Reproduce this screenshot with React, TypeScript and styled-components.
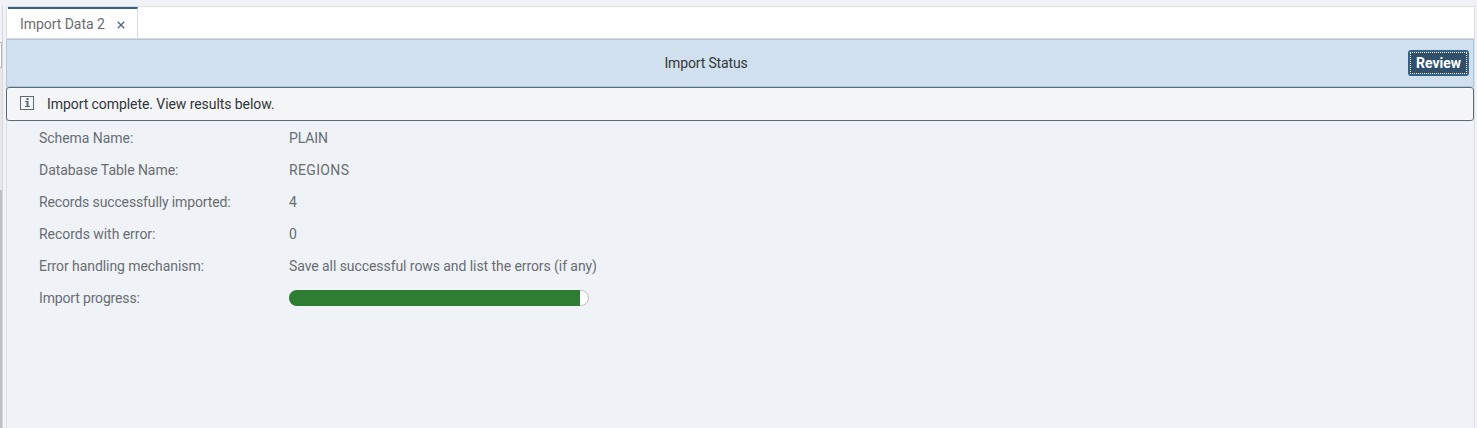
import React from 'react';
import styled, { createGlobalStyle } from 'styled-components';

const Global = createGlobalStyle`
  * { box-sizing: border-box; }
  body { margin: 0; background: #eff3f8; font-family: Roboto, "Liberation Sans", sans-serif; font-size: 14px; color: #6a6d70; overflow: hidden; }
`;

const Page = styled.div`
  display: flex;
  height: 428px;
  padding-top: 6px;
`;
const Gutter = styled.div`
  width: 3px;
  flex: none;
  margin-right: 3px;
  border-right: 1px solid #d9d9d9;
  display: flex;
  flex-direction: column;
`;
const GutterBlock = styled.div<{ $h?: number; $bg: string; $edge?: boolean }>`
  ${(p) => (p.$h ? `height: ${p.$h}px;` : 'flex: 1;')}
  background: ${(p) => p.$bg};
  ${(p) => p.$edge && 'border: 1px solid #b5b5b5; border-left: 0;'}
`;
const Editor = styled.main`
  flex: 1;
  margin-right: 2px;
  border: 1px solid #dcdfe2;
  border-bottom: 0;
`;
const TabBar = styled.div`
  display: flex;
  height: 32px;
  padding-left: 1px;
  background: #fff;
  border-bottom: 1px solid #d9d9d9;
`;
const Tab = styled.div`
  display: flex;
  align-items: center;
  width: 130px;
  padding: 1px 0 0 12px;
  border-top: 2px solid #346187;
  border-right: 1px solid #d9d9d9;
`;
const Text = styled.span<{ $ls?: number }>`
  letter-spacing: ${(p) => p.$ls ?? 0}px;
  white-space: nowrap;
`;
const CloseIcon = styled.svg`
  margin: 2px 0 0 12px;
  width: 8px;
  height: 8px;
`;
const Header = styled.header`
  display: flex;
  align-items: center;
  height: 48px;
  margin-left: -1px;
  padding-right: 4px;
  background: #d1e0ee;
  border: 1px solid #b0c8de;
  color: #32363a;
`;
const Title = styled.h1`
  flex: 1;
  margin: 0;
  padding-right: 3px;
  font-size: 14px;
  font-weight: 400;
  text-align: center;
`;
const ReviewButton = styled.button`
  width: 61px;
  height: 26px;
  padding: 2px;
  background: #346187;
  border: 0;
  border-radius: 3px;
  font: bold 14px Roboto, sans-serif;
  color: #fff;
`;
const FocusRing = styled.span`
  display: flex;
  align-items: center;
  justify-content: center;
  height: 22px;
  border: 1px dotted #fff;
  background: #2f4f6b;
`;
const Banner = styled.div`
  display: flex;
  align-items: center;
  height: 34px;
  margin-left: -1px;
  padding-left: 13px;
  background: #f4f5f6;
  border: 1px solid #5a6b76;
  border-radius: 3px;
  color: #32363a;
`;
const InfoIcon = styled.svg`
  width: 14px;
  height: 14px;
  margin: -2px 13px 0 0;
`;
const Details = styled.dl`
  display: grid;
  grid-template-columns: 250px 1fr;
  grid-auto-rows: 32px;
  align-items: center;
  margin: 1px 0 0;
  padding-left: 32px;
`;
const Label = styled.dt``;
const Value = styled.dd`
  margin: 0;
`;
const Progress = styled.div`
  width: 300px;
  height: 16px;
  background: #fff;
  border: 1px solid #bfbfbf;
  border-radius: 8px;
  display: flex;
`;
const ProgressFill = styled.div`
  width: 291px;
  height: 16px;
  margin: -1px 0 0 -1px;
  border-radius: 8px 0 0 8px;
  background: #2e7d32;
`;

const rows: { label: string; ls: number; value: string; vs: number }[] = [
  { label: 'Schema Name:', ls: -0.05, value: 'PLAIN', vs: -0.1 },
  { label: 'Database Table Name:', ls: -0.05, value: 'REGIONS', vs: 0.35 },
  { label: 'Records successfully imported:', ls: -0.13, value: '4', vs: 0 },
  { label: 'Records with error:', ls: -0.04, value: '0', vs: 0 },
  { label: 'Error handling mechanism:', ls: -0.07, value: 'Save all successful rows and list the errors (if any)', vs: -0.07 },
];

export default function App() {
  return (
    <Page>
      <Global />
      <Gutter>
        <GutterBlock $h={36} $bg="#eff3f8" />
        <GutterBlock $h={26} $bg="#fff" $edge />
        <GutterBlock $h={122} $bg="#e8e8e8" />
        <GutterBlock $bg="#bfbfbf" />
      </Gutter>
      <Editor>
        <TabBar>
          <Tab>
            <Text $ls={-0.05}>Import Data 2</Text>
            <CloseIcon viewBox="0 0 8 8">
              <path d="M.8 .8 7.2 7.2M7.2 .8.8 7.2" stroke="#4f6578" strokeWidth="1.3" />
            </CloseIcon>
          </Tab>
        </TabBar>
        <Header>
          <Title><Text $ls={-0.15}>Import Status</Text></Title>
          <ReviewButton><FocusRing><Text>Review</Text></FocusRing></ReviewButton>
        </Header>
        <Banner>
          <InfoIcon viewBox="0 0 14 14" fill="none" stroke="#5a6b76">
            <rect x=".5" y=".5" width="13" height="13" />
            <path d="M5 5.5h2M5 10.5h5" />
            <path d="M7.5 5v6M6.5 3h2" strokeWidth="2" />
          </InfoIcon>
          <Text $ls={-0.07}>Import complete. View results below.</Text>
        </Banner>
        <Details>
          {rows.map((r) => (
            <React.Fragment key={r.label}>
              <Label><Text $ls={r.ls}>{r.label}</Text></Label>
              <Value><Text $ls={r.vs}>{r.value}</Text></Value>
            </React.Fragment>
          ))}
          <Label><Text $ls={-0.16}>Import progress:</Text></Label>
          <Value><Progress><ProgressFill /></Progress></Value>
        </Details>
      </Editor>
    </Page>
  );
}
